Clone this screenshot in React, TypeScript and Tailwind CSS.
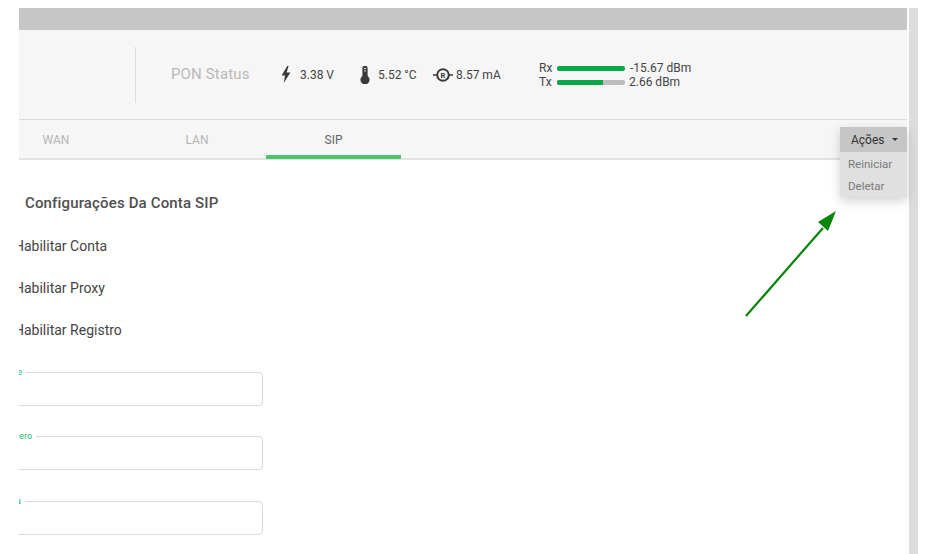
const Bolt = () => (
  <svg width="10" height="17" viewBox="0 0 10 17" className="shrink-0">
    <path d="M6.2 0 L0.6 9.4 H4 L2.8 17 L9.4 6.6 H5.6 L7.6 0 Z" fill="#3a3a3a" />
  </svg>
);

const Thermo = () => (
  <svg width="10" height="18" viewBox="0 0 10 18" className="shrink-0">
    <path d="M2.4 2.4 a2.6 2.6 0 0 1 5.2 0 V10 a4.6 4.6 0 1 1 -5.2 0 Z" fill="#3a3a3a" />
    <rect x="4.2" y="2" width="1.8" height="1" fill="#f6f6f6" />
    <rect x="4.2" y="4.4" width="1.8" height="1" fill="#f6f6f6" />
  </svg>
);

const Amp = () => (
  <svg width="20" height="14" viewBox="0 0 20 14" className="shrink-0">
    <path d="M0 7 H4 M16 7 H20" stroke="#3a3a3a" strokeWidth="1.4" />
    <circle cx="10" cy="7" r="5.8" fill="none" stroke="#3a3a3a" strokeWidth="2" />
    <text x="10" y="9.6" textAnchor="middle" fontSize="7.5" fontWeight="700" fill="#3a3a3a" fontFamily="Roboto, sans-serif">R</text>
  </svg>
);

const Bar = ({ pct }: { pct: number }) => (
  <div className="w-[68px] h-[5px] rounded-[2px] bg-[#bdbdbd] overflow-hidden">
    <div className="h-full bg-[#09a84a]" style={{ width: `${pct}%` }} />
  </div>
);

const Check = ({ label }: { label: string }) => (
  <div className="h-[42px] flex items-center text-[14px] text-[#444] -ml-[5px]">{label}</div>
);

const Field = ({ label, left, mb }: { label: string; left: string; mb: string }) => (
  <div className={`relative -ml-[20px] w-[264px] h-[34px] border border-[#d5dce0] rounded-[4px] bg-white ${mb}`}>
    <span className={`absolute -top-[6px] ${left} bg-white pr-[4px] text-[9px] leading-[10px] text-[#1fbf6a]`}>{label}</span>
  </div>
);

export default function App() {
  return (
    <div className="relative w-[927px] h-[554px] bg-white overflow-hidden font-['Roboto',sans-serif]">
      <div className="flex pt-[8px] pl-[19px] h-full">
        <main className="w-[888px] overflow-hidden shrink-0">
          <div className="h-[22px] bg-[#c6c6c6]" />
          <header className="h-[90px] bg-[#f6f6f6] border-b border-[#dcdcdc] flex items-center">
            <div className="w-[116px] shrink-0" />
            <div className="w-[1px] h-[56px] bg-[#dddddd] shrink-0" />
            <div className="ml-[35px] w-[110px] text-[15px] text-[#b9b9b9] tracking-[0.15px] shrink-0">PON Status</div>
            <div className="flex items-center gap-[9px] w-[79px] text-[12px] text-[#444] shrink-0"><Bolt />3.38 V</div>
            <div className="flex items-center gap-[8px] w-[73px] text-[12px] text-[#444] shrink-0"><Thermo />5.52 °C</div>
            <div className="flex items-center gap-[3px] w-[106px] text-[12px] text-[#444] shrink-0"><Amp />8.57 mA</div>
            <div className="grid grid-cols-[18px_68px_auto] items-center text-[12px] leading-[14px] text-[#444] mt-[1px]">
              <span>Rx</span><Bar pct={100} /><span className="ml-[5px]">-15.67 dBm</span>
              <span>Tx</span><Bar pct={68} /><span className="ml-[4px]">2.66 dBm</span>
            </div>
          </header>
          <nav className="h-[40px] bg-[#f6f6f6] border-b-2 border-[#e2e2e2] flex text-[12px] relative">
            <div className="w-[74px] flex items-center justify-center text-[#b5b5b5] pt-[2px]">WAN</div>
            <div className="ml-[35px] w-[138px] flex items-center justify-center text-[#b5b5b5] pt-[2px]">LAN</div>
            <div className="w-[135px] flex items-center justify-center text-[#666] border-b-[4px] border-[#47c766] rounded-b-[1px] h-[39px] pt-[4px]">SIP</div>
          </nav>
          <section>
            <h2 className="ml-[6px] mt-[33px] text-[15px] font-medium leading-[20px] text-[#4f4f4f] tracking-[0.15px]">Configurações Da Conta SIP</h2>
            <div className="mt-[12px]">
              <Check label="Habilitar Conta" />
              <Check label="Habilitar Proxy" />
              <Check label="Habilitar Registro" />
            </div>
            <div className="mt-[21px]">
              <Field label="Nome" left="-left-[2px]" mb="mb-[30px]" />
              <Field label="Número" left="left-[0px]" mb="mb-[31px]" />
              <Field label="Senha" left="-left-[4px]" mb="" />
            </div>
          </section>
        </main>
        <div className="ml-[2px] w-[9px] h-full bg-[#dcdcdc] shrink-0" />
      </div>

      <div className="absolute left-[840px] top-[127px] w-[67px] shadow-[0_4px_10px_rgba(0,0,0,0.18)]">
        <button className="w-full h-[25px] bg-[#c6c6c6] flex items-center pl-[11px] text-[12px] text-[#333]">
          Ações
          <span className="ml-[7px] w-0 h-0 border-x-[3px] border-x-transparent border-t-[3px] border-t-[#333]" />
        </button>
        <div className="h-[45px] bg-[#e0e0e0] text-[11.5px] text-[#7a7a7a] pl-[8px] pt-[1px]">
          <div className="h-[22px] leading-[22px]">Reiniciar</div>
          <div className="h-[22px] leading-[22px]">Deletar</div>
        </div>
      </div>

      <svg className="absolute left-0 top-0 pointer-events-none" width="927" height="554">
        <line x1="746" y1="316" x2="823" y2="228" stroke="#088408" strokeWidth="2.2" />
        <polygon points="836,211 828,231 818,222" fill="#088408" />
      </svg>
    </div>
  );
}
